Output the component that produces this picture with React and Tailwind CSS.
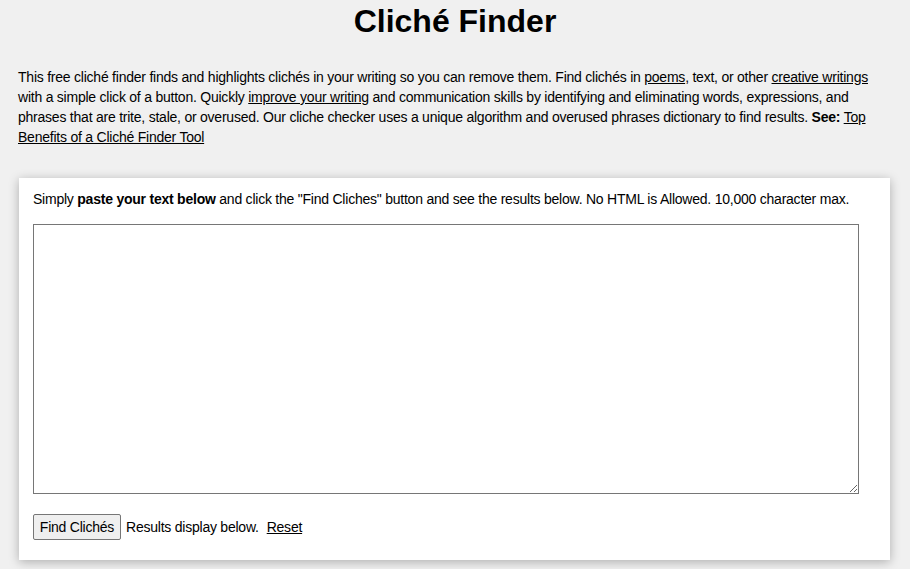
import React, { useState } from "react";

// Cliché Finder page: intro copy, paste box and action row

export default function App() {
  const [text, setText] = useState("");

  return (
    <div className="min-h-screen bg-[#f0f0f0] px-[18px] text-black font-['Liberation_Sans',Arial,sans-serif]">
      <h1 className="pt-[3px] text-center text-[32px] font-bold leading-[37px]">
        Cliché Finder
      </h1>

      <p className="mt-[27px] text-[14px] leading-[20px] tracking-[-0.23px]">
        This free cliché finder finds and highlights clichés in your writing so you can remove them. Find clichés in{" "}
        <a href="#" className="underline">poems</a>, text, or other{" "}
        <a href="#" className="underline">creative writings</a> with a simple click of a button. Quickly{" "}
        <a href="#" className="underline">improve your writing</a> and communication skills by identifying and
        eliminating words, expressions, and phrases that are trite, stale, or overused. Our cliche checker uses a
        unique algorithm and overused phrases dictionary to find results. <b>See:</b>{" "}
        <a href="#" className="underline">Top Benefits of a Cliché Finder Tool</a>
      </p>

      <div className="mt-[31px] ml-px w-[871px] bg-white px-[14px] pt-[11px] pb-[20px] shadow-[0_2px_10px_rgba(0,0,0,0.28)]">
        <p className="text-[14px] leading-[20px] tracking-[-0.23px]">
          Simply <b>paste your text below</b> and click the "Find Cliches" button and see the results below. No HTML
          is Allowed. 10,000 character max.
        </p>

        <textarea
          value={text}
          onChange={(e) => setText(e.target.value)}
          maxLength={10000}
          className="mt-[15px] block h-[270px] w-[826px] border border-[#767676] bg-white p-[2px] text-[14px] outline-none"
        />

        <div className="mt-[20px] flex items-center text-[14px] tracking-[-0.23px]">
          <button className="h-[26px] w-[88px] rounded-[2px] border border-[#767676] bg-[#efefef] text-[14px] leading-none tracking-[-0.23px]">
            Find Clichés
          </button>
          <span className="ml-[5px]">Results display below.</span>
          <a href="#" onClick={() => setText("")} className="ml-[8px] underline">
            Reset
          </a>
        </div>
      </div>
    </div>
  );
}
